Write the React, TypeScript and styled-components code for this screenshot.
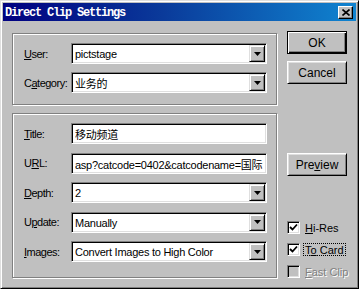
import React from "react";
import styled, { createGlobalStyle } from "styled-components";

const Global = createGlobalStyle`
  html, body { margin: 0; padding: 0; background: #c0c0c0; }
  body { font-family: "Liberation Sans", "Noto Sans CJK SC", sans-serif; }
  * { box-sizing: border-box; }
`;

const Window = styled.div`
  width: 359px;
  height: 289px;
  background: #c0c0c0;
  border: 1px solid;
  border-color: #dfdfdf #000 #000 #dfdfdf;
  box-shadow: inset 1px 1px 0 #fff, inset -1px -1px 0 #808080;
  padding: 2px;
  display: flex;
  flex-direction: column;
  font-family: "Liberation Sans", "Noto Sans CJK SC", sans-serif;
  font-size: 11px;
  color: #000;
`;

const TitleBar = styled.div`
  height: 18px;
  display: flex;
  align-items: center;
  padding: 0 0 0 2px;
  background: linear-gradient(90deg, #000080 0%, #0a3a9a 45%, #1084d0 100%);
`;

const TitleText = styled.span`
  font-family: "Liberation Mono", "DejaVu Sans Mono", monospace;
  font-weight: bold;
  font-size: 12px;
  letter-spacing: -1.2px;
  color: #fff;
  padding-top: 1px;
`;

const CloseButton = styled.div`
  margin-left: auto;
  margin-right: 3px;
  width: 15px;
  height: 13px;
  background: #c0c0c0;
  border: 1px solid;
  border-color: #fff #000 #000 #fff;
  box-shadow: inset -1px -1px 0 #808080;
  display: flex;
  align-items: center;
  justify-content: center;
`;

const Body = styled.div`
  display: flex;
  padding: 10px 0 0 9px;
`;

const LeftColumn = styled.div`
  display: flex;
  flex-direction: column;
  gap: 8px;
  padding-top: 2px;
`;

const Panel = styled.div<{ $gap: number; $pb: number }>`
  width: 265px;
  border: 1px solid #808080;
  box-shadow: inset 1px 1px 0 #fff, 1px 1px 0 #fff;
  padding: 9px 9px ${(p) => p.$pb}px 11px;
  display: flex;
  flex-direction: column;
  gap: ${(p) => p.$gap}px;
`;

const Row = styled.div`
  display: flex;
  align-items: center;
  height: 21px;
`;

const Label = styled.label`
  width: 47px;
  flex: none;
  font-size: 11px;
  letter-spacing: -0.5px;
  white-space: nowrap;
`;

const Field = styled.div`
  width: 196px;
  height: 21px;
  background: #fff;
  border: 1px solid;
  border-color: #808080 #fff #fff #808080;
  box-shadow: inset 1px 1px 0 #000, inset -1px -1px 0 #dfdfdf;
  display: flex;
  align-items: center;
  padding: 0 1px 0 3px;
  overflow: hidden;
`;

const FieldText = styled.span`
  flex: 1;
  min-width: 0;
  overflow: hidden;
  white-space: nowrap;
  font-size: 11px;
  letter-spacing: -0.25px;
  padding-top: 1px;
`;

const DropButton = styled.div`
  flex: none;
  width: 16px;
  height: 17px;
  background: #c0c0c0;
  border: 1px solid;
  border-color: #dfdfdf #000 #000 #dfdfdf;
  box-shadow: inset 1px 1px 0 #fff, inset -1px -1px 0 #808080;
  display: flex;
  align-items: center;
  justify-content: center;
`;

const RightColumn = styled.div`
  width: 60px;
  margin-left: 10px;
  display: flex;
  flex-direction: column;
`;

const Button = styled.button<{ $default?: boolean; $mt?: number }>`
  width: 60px;
  height: 23px;
  margin: ${(p) => p.$mt ?? 0}px 0 0 0;
  padding: 0;
  background: #c0c0c0;
  font-family: "Liberation Sans", sans-serif;
  font-size: 12px;
  color: #000;
  border: 1px solid;
  border-color: ${(p) => (p.$default ? "#000" : "#fff #000 #000 #fff")};
  box-shadow: ${(p) =>
    p.$default
      ? "inset 1px 1px 0 #fff, inset -1px -1px 0 #000, inset -2px -2px 0 #808080"
      : "inset 1px 1px 0 #dfdfdf, inset -1px -1px 0 #808080"};
  cursor: default;
`;

const Checks = styled.div`
  margin-top: 41px;
  display: flex;
  flex-direction: column;
`;

const CheckRow = styled.div<{ $disabled?: boolean }>`
  height: 22px;
  display: flex;
  align-items: flex-start;
  padding-top: 4px;
  color: ${(p) => (p.$disabled ? "#808080" : "#000")};
  text-shadow: ${(p) => (p.$disabled ? "1px 1px 0 #fff" : "none")};
`;

const Box = styled.div<{ $disabled?: boolean }>`
  width: 13px;
  height: 13px;
  flex: none;
  background: ${(p) => (p.$disabled ? "#c0c0c0" : "#fff")};
  border: 1px solid;
  border-color: #808080 #fff #fff #808080;
  box-shadow: inset 1px 1px 0 #000, inset -1px -1px 0 #dfdfdf;
  display: flex;
  align-items: center;
  justify-content: center;
`;

const CheckLabel = styled.span<{ $focus?: boolean }>`
  margin-left: 3px;
  padding: 0 1px;
  height: 13px;
  line-height: 12px;
  font-size: 11px;
  border: 1px dotted ${(p) => (p.$focus ? "#000" : "transparent")};
  white-space: nowrap;
`;

const Arrow = () => (
  <svg width="7" height="4" viewBox="0 0 7 4">
    <polygon points="0,0 7,0 3.5,4" fill="#000" />
  </svg>
);

const Check = () => (
  <svg width="9" height="9" viewBox="0 0 9 9">
    <path d="M1 4 L3.5 6.5 L8 1.5" stroke="#000" strokeWidth="1.8" fill="none" />
  </svg>
);

const CloseGlyph = () => (
  <svg width="8" height="7" viewBox="0 0 8 7">
    <path d="M0.5 0.5 L7.5 6.5 M7.5 0.5 L0.5 6.5" stroke="#000" strokeWidth="1.6" />
  </svg>
);

const Combo = ({ text }: { text: string }) => (
  <Field>
    <FieldText>{text}</FieldText>
    <DropButton>
      <Arrow />
    </DropButton>
  </Field>
);

const TextField = ({ text }: { text: string }) => (
  <Field>
    <FieldText>{text}</FieldText>
  </Field>
);

export default function App() {
  return (
    <>
      <Global />
      <Window>
        <TitleBar>
          <TitleText>Direct Clip Settings</TitleText>
          <CloseButton>
            <CloseGlyph />
          </CloseButton>
        </TitleBar>
        <Body>
          <LeftColumn>
            <Panel $gap={8} $pb={11}>
              <Row>
                <Label>
                  <u>U</u>ser:
                </Label>
                <Combo text="pictstage" />
              </Row>
              <Row>
                <Label>
                  C<u>a</u>tegory:
                </Label>
                <Combo text="业务的" />
              </Row>
            </Panel>
            <Panel $gap={8.5} $pb={15}>
              <Row>
                <Label>
                  <u>T</u>itle:
                </Label>
                <TextField text="移动频道" />
              </Row>
              <Row>
                <Label>
                  U<u>R</u>L:
                </Label>
                <TextField text="asp?catcode=0402&catcodename=国际" />
              </Row>
              <Row>
                <Label>
                  <u>D</u>epth:
                </Label>
                <Combo text="2" />
              </Row>
              <Row>
                <Label>
                  U<u>p</u>date:
                </Label>
                <Combo text="Manually" />
              </Row>
              <Row>
                <Label>
                  <u>I</u>mages:
                </Label>
                <Combo text="Convert Images to High Color" />
              </Row>
            </Panel>
          </LeftColumn>
          <RightColumn>
            <Button $default>OK</Button>
            <Button $mt={7}>Cancel</Button>
            <Button $mt={69}>
              Pre<u>v</u>iew
            </Button>
            <Checks>
              <CheckRow>
                <Box>
                  <Check />
                </Box>
                <CheckLabel>
                  <u>H</u>i-Res
                </CheckLabel>
              </CheckRow>
              <CheckRow>
                <Box>
                  <Check />
                </Box>
                <CheckLabel $focus>
                  T<u>o</u> Card
                </CheckLabel>
              </CheckRow>
              <CheckRow $disabled>
                <Box $disabled />
                <CheckLabel>
                  <u>F</u>ast Clip
                </CheckLabel>
              </CheckRow>
            </Checks>
          </RightColumn>
        </Body>
      </Window>
    </>
  );
}
